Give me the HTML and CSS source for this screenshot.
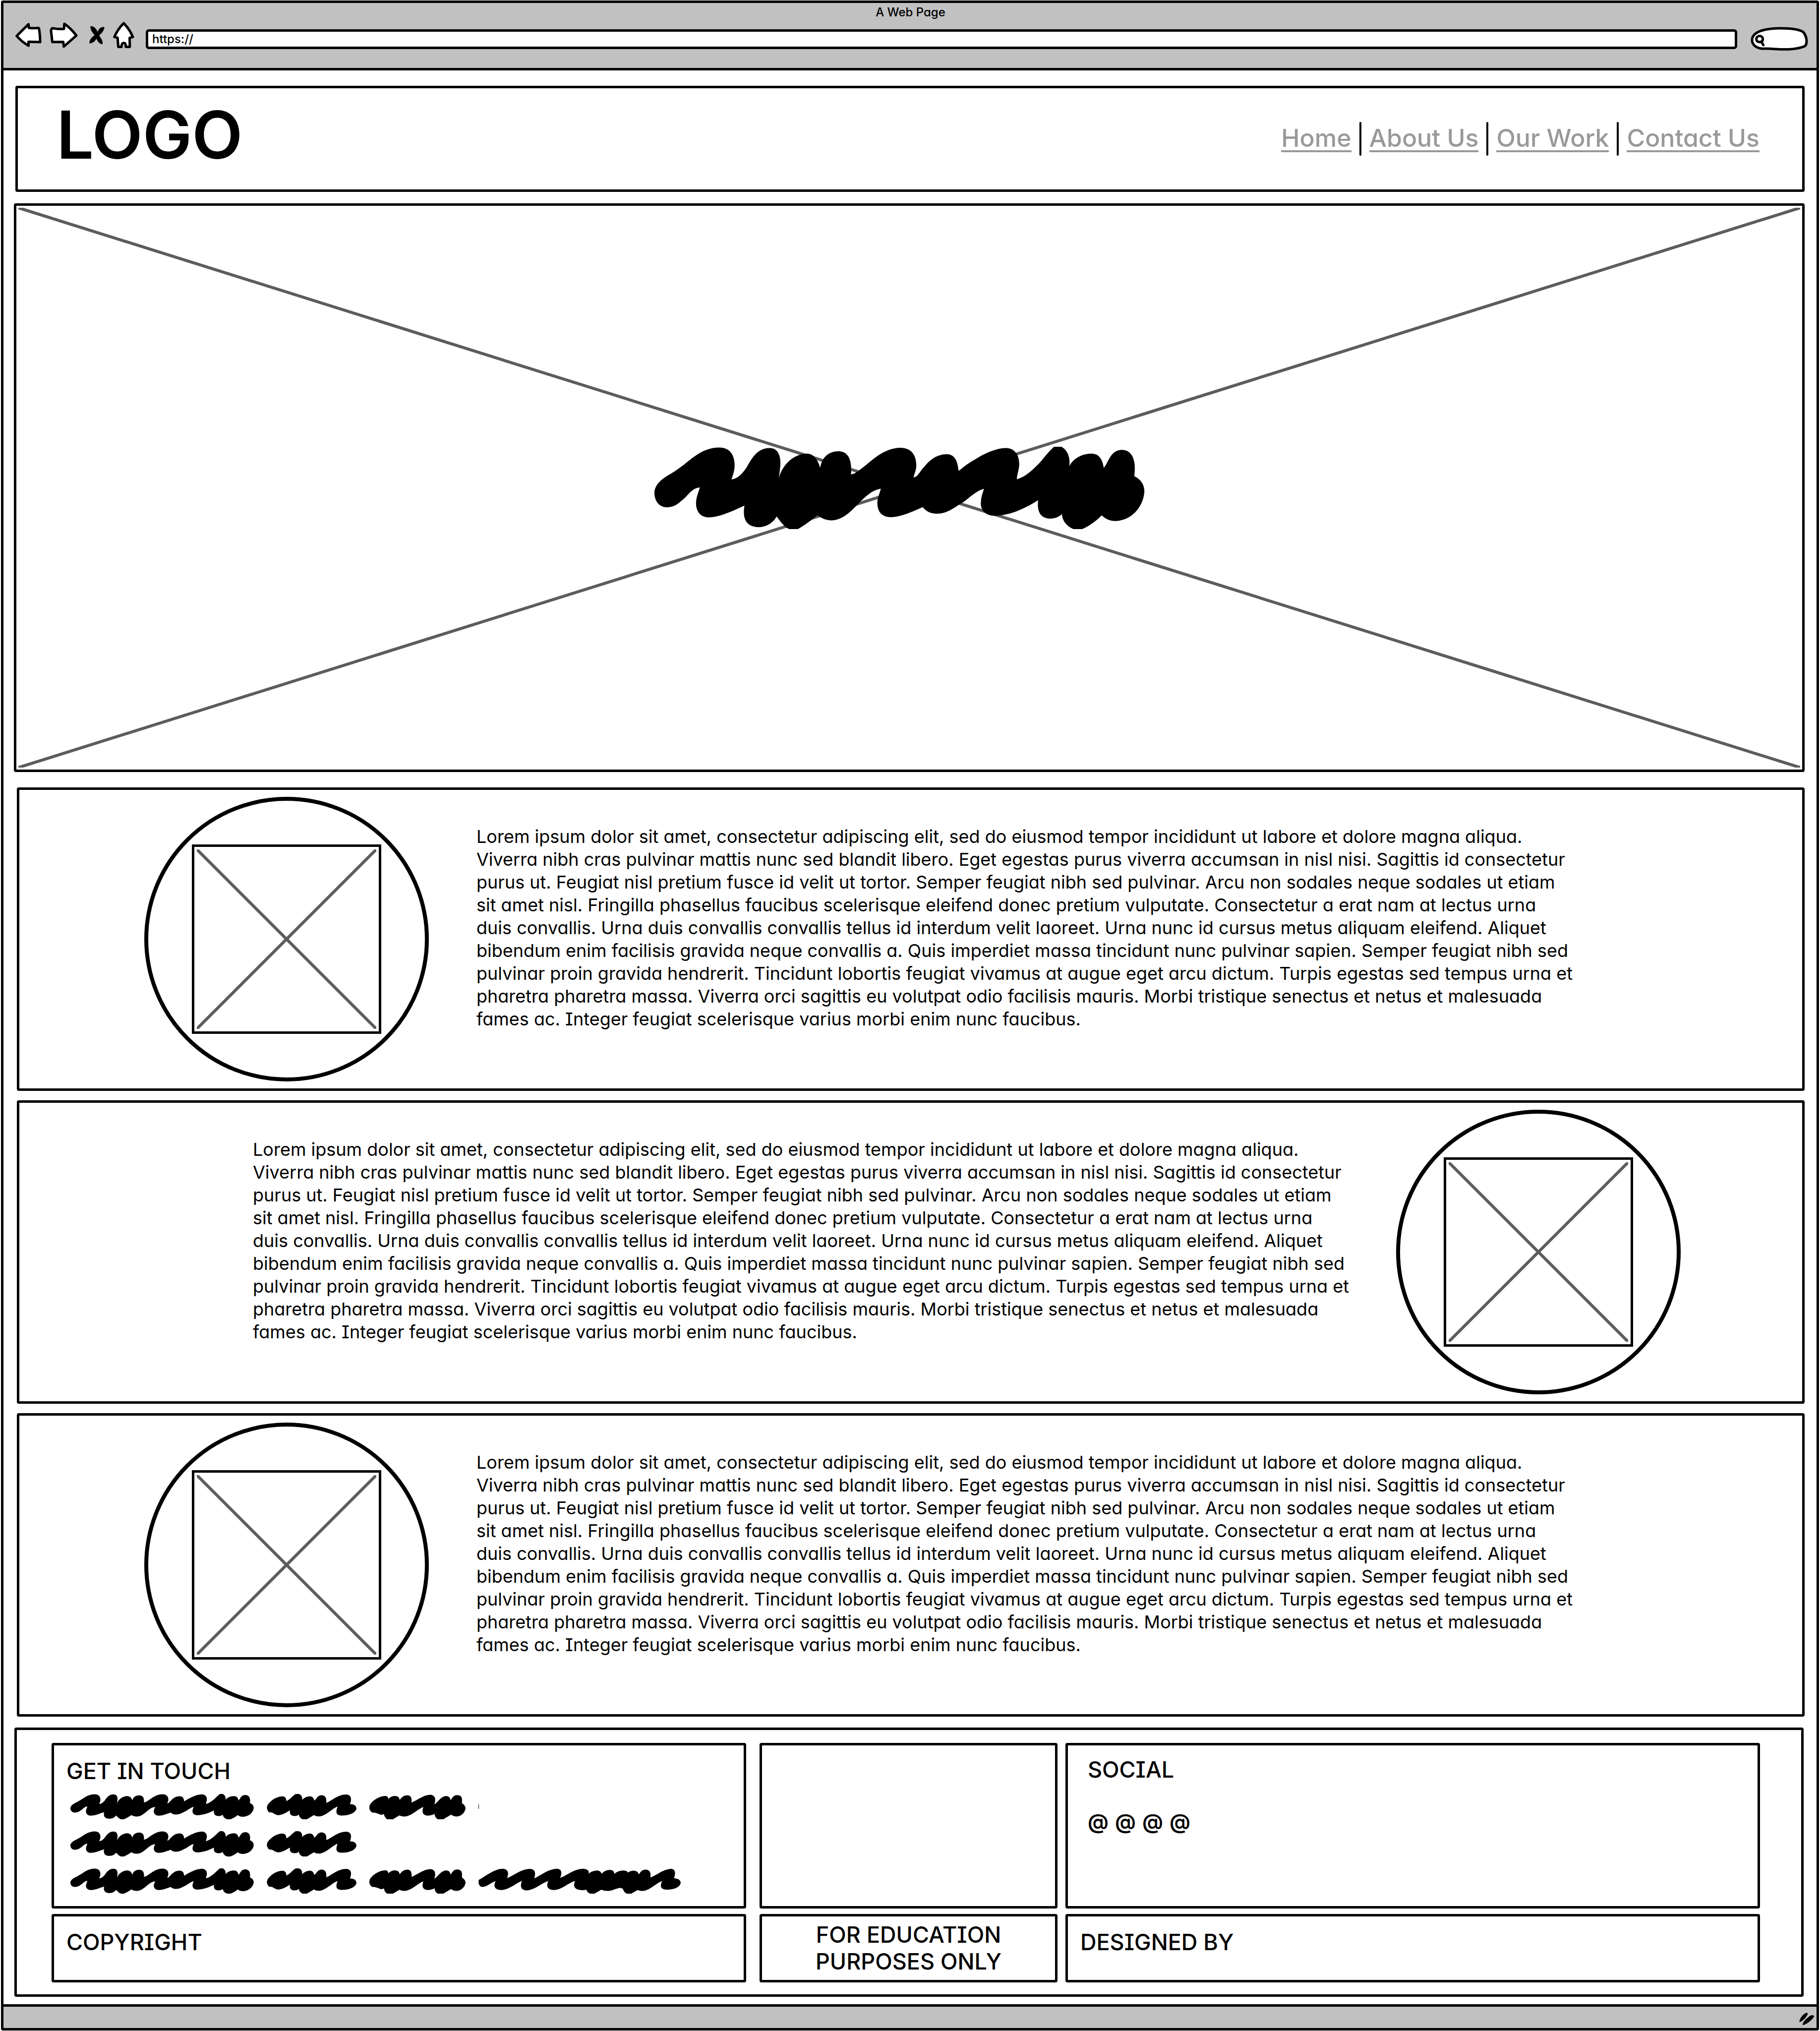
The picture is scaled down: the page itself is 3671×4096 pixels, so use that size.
FILE: index.html
```
<!DOCTYPE html>
<html lang="en">
<head>
<meta charset="utf-8">
<meta name="viewport" content="width=device-width, initial-scale=1">
<title>A Web Page</title>
<link rel="stylesheet" href="styles.css">
</head>
<body>
<svg class="sprite" aria-hidden="true">
  <symbol id="scribble-long" viewBox="56 127 1449 521" preserveAspectRatio="none">
    <path d="M93,510 C66,510 56,460 56,420 C56,370 76,330 105,297 C120,278 130,262 145,238 C175,185 205,132 247,132 C283,132 293,190 293,245 C293,280 288,305 284,333 C300,333 318,295 330,252 C345,195 362,135 396,135 C425,135 430,200 428,245 C427,280 425,295 424,326 C430,260 462,171 507,170 C530,172 540,220 546,260 C550,200 568,156 600,155 C632,157 640,220 637,302 C650,300 665,270 680,245 C710,190 742,134 783,133 C820,135 830,190 830,250 C828,290 823,300 822,320 C835,320 840,280 855,250 C870,210 890,175 920,174 C945,176 952,220 955,281 C975,245 985,230 1000,212 C1030,170 1065,136 1095,135 C1125,137 1135,190 1134,245 C1132,285 1128,300 1127,333 C1150,320 1175,275 1200,215 C1215,175 1225,150 1237,127 L1259,127 C1275,145 1286,190 1282,252 C1290,210 1315,171 1347,170 C1372,171 1380,210 1384,260 C1398,230 1402,148 1438,147 C1470,149 1480,220 1474,313 C1495,335 1504,370 1504,412 C1500,520 1460,597 1418,597 C1400,597 1386,580 1378,561 C1360,600 1340,630 1320,648 L1294,648 C1275,630 1262,600 1260,553 C1252,570 1240,582 1225,582 C1195,580 1186,530 1190,465 C1150,520 1105,562 1063,564 C1030,564 1018,520 1021,470 C1022,440 1026,420 1030,393 C1000,410 980,470 955,495 C935,525 915,551 890,551 C872,550 858,535 849,509 C820,535 785,573 753,573 C725,571 713,530 715,470 C717,440 722,420 725,392 C700,400 680,440 655,495 C635,540 610,593 579,593 C562,592 550,580 538,561 C520,590 500,625 480,648 L454,648 C440,635 430,605 417,568 C410,600 390,636 363,636 C330,634 315,590 322,500 C290,530 250,574 216,574 C190,573 178,530 179,480 C180,440 186,420 190,384 C165,388 155,440 135,470 C123,495 110,510 93,510Z"/>
  </symbol>
  <symbol id="scribble-short" viewBox="972 42 424 162" preserveAspectRatio="none">
    <path d="M984,160 C970,145 970,120 980,105 C995,80 1020,57 1048,57 C1062,60 1064,72 1065,88 C1085,75 1092,55 1109,42 L1123,42 C1140,50 1140,65 1139,80 C1150,65 1162,57 1178,57 C1192,60 1194,72 1197,84 C1210,70 1212,51 1232,50 C1250,52 1256,70 1253,99 C1275,90 1305,45 1350,45 C1375,50 1373,80 1365,107 C1385,105 1396,118 1396,137 C1390,165 1360,180 1325,180 C1300,178 1296,160 1307,123 C1285,130 1250,186 1218,186 C1208,186 1200,182 1195,177 L1162,204 L1142,204 C1130,197 1126,188 1123,173 C1120,180 1112,183 1102,183 C1085,182 1079,170 1082,147 C1065,160 1045,178 1025,178 C1008,176 1005,158 984,160Z"/>
  </symbol>
  <symbol id="scribble-medium" viewBox="711 378 212 139" preserveAspectRatio="none">
    <path d="M718,480 C709,470 709,440 716,425 C725,400 738,388 747,389 C752,391 752,398 753,405 C757,394 762,389 768,389 C776,391 777,402 778,411 C782,395 788,385 795,385 C803,387 805,402 804,425 C815,415 830,383 845,382 C857,384 858,410 854,435 C862,425 868,392 880,389 C888,391 889,402 890,412 C894,400 896,384 905,384 C915,386 916,400 915,428 C921,438 923,448 923,458 C921,485 912,502 903,502 C898,502 894,497 891,492 L874,517 L862,517 C857,510 855,500 855,488 C851,493 846,497 840,497 C829,495 826,480 830,450 C820,455 805,500 788,502 C783,502 780,499 777,496 L763,517 L750,517 C746,510 744,500 743,488 C741,492 738,493 736,492 C728,485 726,480 718,480Z"/>
  </symbol>
  <symbol id="scribble-wide" viewBox="952 785 446 140" preserveAspectRatio="none">
    <path d="M960,888 C953,885 951,865 953,848 C965,835 985,788 1006,787 C1019,790 1019,815 1015,840 C1030,825 1045,790 1066,788 C1079,791 1078,815 1075,840 C1090,825 1105,788 1126,787 C1137,790 1136,815 1132,838 C1147,825 1162,788 1183,787 C1195,790 1196,802 1195,815 C1199,805 1206,798 1214,797 C1220,799 1222,806 1224,815 C1228,802 1234,794 1242,793 C1250,795 1251,804 1252,815 C1257,805 1263,798 1271,797 C1278,798 1280,802 1282,808 C1286,800 1290,797 1296,798 C1302,800 1304,808 1306,818 C1310,802 1313,792 1321,792 C1330,794 1333,810 1331,835 C1345,825 1358,790 1377,787 C1387,790 1387,815 1383,840 C1392,840 1398,850 1398,866 C1396,890 1384,903 1367,903 C1353,901 1352,885 1357,855 C1345,865 1330,908 1314,910 C1309,910 1306,908 1303,905 L1289,925 L1279,925 C1274,918 1272,910 1270,897 L1264,893 L1253,900 C1248,906 1243,910 1238,910 C1230,910 1227,907 1223,903 L1208,925 L1198,925 C1193,918 1191,912 1190,903 C1186,906 1182,906 1178,905 C1164,902 1160,885 1165,855 C1150,865 1135,905 1118,905 C1104,903 1101,885 1106,855 C1092,865 1075,907 1058,907 C1046,905 1043,885 1048,855 C1035,865 1020,905 1002,905 C988,903 984,885 990,856 C980,862 972,888 960,888Z"/>
  </symbol>
  <symbol id="cross" viewBox="0 0 100 100" preserveAspectRatio="none">
    <path d="M0,0 L100,100 M100,0 L0,100" vector-effect="non-scaling-stroke"/>
  </symbol>
</svg>

<div class="window">
  <div class="chrome">
    <div class="chrome-title">A Web Page</div>
    <div class="chrome-bar">
      <div class="chrome-buttons">
        <button type="button" aria-label="Back">
          <svg class="icon icon-back" viewBox="82 142 146 154" preserveAspectRatio="none"><path vector-effect="non-scaling-stroke" d="M89,225 L155,151 L157,174 Q185,178 207,174 Q213,174 214,182 Q220,225 220,264 L155,262 L155,287 Q120,265 89,225Z"/></svg>
        </button>
        <button type="button" aria-label="Forward">
          <svg class="icon icon-forward" viewBox="273 142 155 162" preserveAspectRatio="none"><path vector-effect="non-scaling-stroke" d="M290,179 Q320,186 352,183 L354,151 Q390,180 420,225 L351,294 L348,265 L288,266 Q284,225 281,197 Q281,182 290,179Z"/></svg>
        </button>
        <button type="button" aria-label="Stop">
          <svg class="icon-stop" viewBox="490 154 85 118" preserveAspectRatio="none"><path d="M497,156 C520,156 530,175 536,192 C545,165 560,160 574,162 C574,185 555,205 545,215 C555,230 567,250 564,270 C545,268 535,250 530,235 C520,255 505,265 491,264 C490,240 505,225 520,212 C505,195 495,175 497,156Z"/></svg>
        </button>
        <button type="button" aria-label="Home">
          <svg class="icon icon-home" viewBox="618 136 124 168" preserveAspectRatio="none"><path vector-effect="non-scaling-stroke" d="M680,145 Q712,180 731,231 L713,237 L714,293 L692,293 Q692,268 680,268 Q668,268 668,293 L650,293 L646,236 L628,231 Q648,180 680,145Z"/></svg>
        </button>
      </div>
      <input class="address" type="text" value="https://" aria-label="Address">
      <div class="search">
        <svg class="icon icon-search" viewBox="1145 169 352 153" preserveAspectRatio="none" aria-hidden="true">
          <path vector-effect="non-scaling-stroke" d="M1222,307 C1180,305 1153,283 1154,250 C1158,200 1230,178 1330,178 C1390,178 1440,184 1466,201 C1482,218 1492,250 1486,275 Q1484,290 1470,294 C1400,318 1330,311 1290,309 Q1255,306 1222,307Z"/>
          <path vector-effect="non-scaling-stroke" d="M1180,247 A20,20 0 1 1 1220,247 Q1220,264 1200,265 Q1182,265 1180,247Z M1211,264 L1223,284"/>
        </svg>
        <input type="search" aria-label="Search">
      </div>
    </div>
  </div>

  <div class="page">
    <header class="box site-header">
      <h1 class="logo">LOGO</h1>
      <nav>
        <ul class="menu">
          <li><a href="#home">Home</a></li>
          <li><a href="#about">About Us</a></li>
          <li><a href="#work">Our Work</a></li>
          <li><a href="#contact">Contact Us</a></li>
        </ul>
      </nav>
    </header>

    <main>
      <section class="box hero">
        <svg class="cross" aria-hidden="true"><use href="#cross"/></svg>
        <svg class="headline" role="img" aria-label="Headline"><use href="#scribble-long"/></svg>
      </section>

      <section class="box feature">
        <div class="circle"><div class="picture"><svg class="cross" aria-hidden="true"><use href="#cross"/></svg></div></div>
        <p>Lorem ipsum dolor sit amet, consectetur adipiscing elit, sed do eiusmod tempor incididunt ut labore et dolore magna aliqua.<br>
          Viverra nibh cras pulvinar mattis nunc sed blandit libero. Eget egestas purus viverra accumsan in nisl nisi. Sagittis id consectetur<br>
          purus ut. Feugiat nisl pretium fusce id velit ut tortor. Semper feugiat nibh sed pulvinar. Arcu non sodales neque sodales ut etiam<br>
          sit amet nisl. Fringilla phasellus faucibus scelerisque eleifend donec pretium vulputate. Consectetur a erat nam at lectus urna<br>
          duis convallis. Urna duis convallis convallis tellus id interdum velit laoreet. Urna nunc id cursus metus aliquam eleifend. Aliquet<br>
          bibendum enim facilisis gravida neque convallis a. Quis imperdiet massa tincidunt nunc pulvinar sapien. Semper feugiat nibh sed<br>
          pulvinar proin gravida hendrerit. Tincidunt lobortis feugiat vivamus at augue eget arcu dictum. Turpis egestas sed tempus urna et<br>
          pharetra pharetra massa. Viverra orci sagittis eu volutpat odio facilisis mauris. Morbi tristique senectus et netus et malesuada<br>
          fames ac. Integer feugiat scelerisque varius morbi enim nunc faucibus.</p>
      </section>

      <section class="box feature feature-reversed">
        <p>Lorem ipsum dolor sit amet, consectetur adipiscing elit, sed do eiusmod tempor incididunt ut labore et dolore magna aliqua.<br>
          Viverra nibh cras pulvinar mattis nunc sed blandit libero. Eget egestas purus viverra accumsan in nisl nisi. Sagittis id consectetur<br>
          purus ut. Feugiat nisl pretium fusce id velit ut tortor. Semper feugiat nibh sed pulvinar. Arcu non sodales neque sodales ut etiam<br>
          sit amet nisl. Fringilla phasellus faucibus scelerisque eleifend donec pretium vulputate. Consectetur a erat nam at lectus urna<br>
          duis convallis. Urna duis convallis convallis tellus id interdum velit laoreet. Urna nunc id cursus metus aliquam eleifend. Aliquet<br>
          bibendum enim facilisis gravida neque convallis a. Quis imperdiet massa tincidunt nunc pulvinar sapien. Semper feugiat nibh sed<br>
          pulvinar proin gravida hendrerit. Tincidunt lobortis feugiat vivamus at augue eget arcu dictum. Turpis egestas sed tempus urna et<br>
          pharetra pharetra massa. Viverra orci sagittis eu volutpat odio facilisis mauris. Morbi tristique senectus et netus et malesuada<br>
          fames ac. Integer feugiat scelerisque varius morbi enim nunc faucibus.</p>
        <div class="circle"><div class="picture"><svg class="cross" aria-hidden="true"><use href="#cross"/></svg></div></div>
      </section>

      <section class="box feature">
        <div class="circle"><div class="picture"><svg class="cross" aria-hidden="true"><use href="#cross"/></svg></div></div>
        <p>Lorem ipsum dolor sit amet, consectetur adipiscing elit, sed do eiusmod tempor incididunt ut labore et dolore magna aliqua.<br>
          Viverra nibh cras pulvinar mattis nunc sed blandit libero. Eget egestas purus viverra accumsan in nisl nisi. Sagittis id consectetur<br>
          purus ut. Feugiat nisl pretium fusce id velit ut tortor. Semper feugiat nibh sed pulvinar. Arcu non sodales neque sodales ut etiam<br>
          sit amet nisl. Fringilla phasellus faucibus scelerisque eleifend donec pretium vulputate. Consectetur a erat nam at lectus urna<br>
          duis convallis. Urna duis convallis convallis tellus id interdum velit laoreet. Urna nunc id cursus metus aliquam eleifend. Aliquet<br>
          bibendum enim facilisis gravida neque convallis a. Quis imperdiet massa tincidunt nunc pulvinar sapien. Semper feugiat nibh sed<br>
          pulvinar proin gravida hendrerit. Tincidunt lobortis feugiat vivamus at augue eget arcu dictum. Turpis egestas sed tempus urna et<br>
          pharetra pharetra massa. Viverra orci sagittis eu volutpat odio facilisis mauris. Morbi tristique senectus et netus et malesuada<br>
          fames ac. Integer feugiat scelerisque varius morbi enim nunc faucibus.</p>
      </section>
    </main>

    <footer class="box site-footer">
      <div class="box cell cell-first">
        <h2>GET IN TOUCH</h2>
        <div class="lines">
          <div class="line">
            <svg class="word-long" aria-hidden="true"><use href="#scribble-long"/></svg>
            <svg class="word-short" aria-hidden="true"><use href="#scribble-short"/></svg>
            <svg class="word-medium" aria-hidden="true"><use href="#scribble-medium"/></svg>
            <span class="tick"></span>
          </div>
          <div class="line">
            <svg class="word-long" aria-hidden="true"><use href="#scribble-long"/></svg>
            <svg class="word-short" aria-hidden="true"><use href="#scribble-short"/></svg>
          </div>
          <div class="line">
            <svg class="word-long" aria-hidden="true"><use href="#scribble-long"/></svg>
            <svg class="word-short" aria-hidden="true"><use href="#scribble-short"/></svg>
            <svg class="word-medium" aria-hidden="true"><use href="#scribble-medium"/></svg>
            <svg class="word-wide" aria-hidden="true"><use href="#scribble-wide"/></svg>
          </div>
        </div>
      </div>
      <div class="box cell"></div>
      <div class="box cell cell-social">
        <h2>SOCIAL</h2>
        <div class="social-links">
          <a href="#social-1">@</a>
          <a href="#social-2">@</a>
          <a href="#social-3">@</a>
          <a href="#social-4">@</a>
        </div>
      </div>
      <div class="box cell cell-first">COPYRIGHT</div>
      <div class="box cell cell-center">FOR EDUCATION<br>PURPOSES ONLY</div>
      <div class="box cell">DESIGNED BY</div>
    </footer>
  </div>

  <div class="status">
    <svg class="grip" viewBox="890 437 97 80" preserveAspectRatio="none" aria-hidden="true"><path d="M892,496 C890,475 915,445 936,438 Q945,438 944,447 C930,472 912,490 892,496Z M912,515 C908,495 950,458 970,452 Q980,452 986,458 C970,485 940,508 912,515Z"/></svg>
  </div>
</div>
</body>
</html>
```
FILE: styles.css
```
* {
  box-sizing: border-box;
}

body {
  margin: 0;
  padding: 1px 2px;
  background: #fff;
  color: #000;
  font-family: Inter, "Liberation Sans", sans-serif;
  font-size: 36px;
  font-weight: 500;
  line-height: 46px;
  /* single-storey a, capital I with serifs */
  font-feature-settings: "cv11" 1, "cv08" 1;
}

h1,
h2,
p,
ul {
  margin: 0;
  padding: 0;
  font-weight: inherit;
}

svg {
  display: block;
}

input,
button {
  padding: 0;
  border: 0;
  background: none;
  color: inherit;
  font: inherit;
  font-feature-settings: inherit;
}

.sprite {
  position: absolute;
  width: 0;
  height: 0;
}

.window {
  display: flex;
  flex-direction: column;
  border: 5px solid #000;
  border-radius: 4px;
}

/* Browser chrome */
.chrome {
  padding: 6px 17px 34px 19px;
  border-bottom: 5px solid #000;
  background: #c1c1c1;
  font-size: 24px;
}

.chrome-title {
  line-height: 26px;
  text-align: center;
}

.chrome-bar {
  display: flex;
  align-items: center;
}

.chrome-buttons {
  display: grid;
  grid-template-columns: 62px 80px 54px 54px;
  margin-right: 18px;
}

.chrome-buttons button {
  display: grid;
  place-items: center;
}

.icon {
  overflow: visible;
  fill: #fff;
  stroke: #000;
  stroke-width: 5px;
  stroke-linejoin: round;
  stroke-linecap: round;
}

.icon-back {
  width: 53px;
  height: 49px;
}

.icon-forward {
  width: 57px;
  height: 52px;
}

.icon-stop {
  width: 31px;
  height: 38px;
}

.icon-home {
  width: 45px;
  height: 54px;
}

.address {
  flex: 1;
  height: 40px;
  margin: 16px 27px 0 0;
  padding: 0 8px;
  border: 5px solid #000;
  border-radius: 6px;
  background: #fff;
}

.search {
  display: grid;
  padding-top: 16px;
}

.search > * {
  grid-area: 1 / 1;
}

.icon-search {
  width: 116px;
  height: 49px;
}

.search input {
  width: 76px;
  margin-left: 30px;
  outline: 0;
}

/* Page */
.page {
  padding: 31px 24px 15px 21px;
}

.box {
  border: 5px solid #000;
  border-radius: 4px;
}

.site-header {
  display: flex;
  justify-content: space-between;
  align-items: center;
  min-height: 214px;
  margin-left: 3px;
  padding: 0 86px 0 78px;
}

.logo {
  padding-bottom: 16px;
  font-size: 133px;
  font-weight: 600;
  line-height: 130px;
}

.menu {
  display: flex;
  align-items: center;
  list-style: none;
  font-size: 50px;
  line-height: 50px;
}

.menu li {
  display: flex;
  align-items: center;
}

.menu li + li::before {
  content: "";
  width: 4px;
  height: 68px;
  margin: 0 16px;
  border-radius: 2px;
  background: #000;
}

.menu a {
  border-bottom: 4px solid #999;
  color: #999;
  text-decoration: none;
}

.hero {
  position: relative;
  display: flex;
  justify-content: center;
  align-items: center;
  aspect-ratio: 3612 / 1147;
  margin-top: 23px;
  padding-right: 40px;
}

.cross {
  width: 100%;
  height: 100%;
  stroke: #5c5c5c;
  stroke-width: 6px;
}

.hero .cross {
  position: absolute;
  inset: 0;
  padding: 4px;
}

.headline {
  position: relative;
  width: 989px;
  height: 166px;
}

.feature {
  display: flex;
  align-items: flex-start;
  gap: 96px;
  margin: 31px 0 0 6px;
  padding: 14px 240px 14px 252px;
}

.feature + .feature {
  margin-top: 19px;
}

.feature-reversed {
  justify-content: space-between;
  padding-left: 471px;
  padding-right: 245px;
}

.feature p {
  min-width: 0;
  padding-top: 57px;
  font-weight: 400;
  white-space: nowrap;
}

.circle {
  display: grid;
  flex: none;
  place-items: center;
  width: 574px;
  height: 574px;
  border: 8px solid #000;
  border-radius: 50%;
}

.picture {
  width: 382px;
  height: 382px;
  padding: 5px;
  border: 5px solid #000;
}

/* Footer */
.site-footer {
  display: grid;
  grid-template-columns: 1412fr 601fr 1401fr;
  gap: 11px 16px;
  margin: 22px 2px 0 1px;
  padding: 26px 83px 24px 70px;
  font-size: 45px;
  line-height: 54px;
}

.cell {
  min-height: 138px;
  padding: 25px;
}

.cell-first {
  margin-right: 11px;
}

.cell-center {
  display: grid;
  place-content: center;
  padding: 0;
  text-align: center;
}

.cell-social {
  min-height: 334px;
  padding: 22px 40px;
}

.site-footer h2 {
  font-size: inherit;
}

.lines {
  display: grid;
  gap: 24px;
  margin: 19px 0 0 8px;
}

.line {
  display: flex;
  align-items: center;
  gap: 26px;
  height: 51px;
}

.line svg {
  height: 51px;
}

.word-long {
  width: 370px;
}

.word-short {
  width: 181px;
}

.word-medium {
  width: 194px;
}

.word-wide {
  width: 408px;
}

.tick {
  width: 1px;
  height: 9px;
  background: #000;
}

.social-links {
  display: grid;
  grid-template-columns: repeat(4, 55px);
  margin-top: 51px;
  font-size: 42px;
  font-weight: 600;
}

.social-links a {
  color: inherit;
  text-decoration: none;
}

.status {
  display: flex;
  justify-content: flex-end;
  align-items: center;
  height: 48px;
  padding: 7px 4px 0 0;
  border-top: 5px solid #000;
  background: #c1c1c1;
}

.grip {
  width: 31px;
  height: 26px;
}
```
